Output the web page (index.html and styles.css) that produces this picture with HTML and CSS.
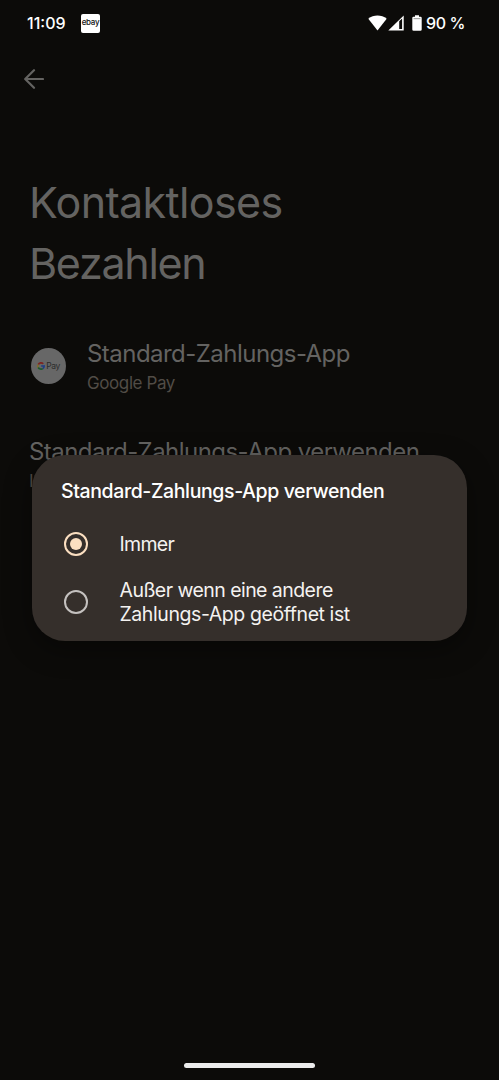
FILE: index.html
```
<!DOCTYPE html>
<html lang="de">
<head>
<meta charset="utf-8">
<title>Kontaktloses Bezahlen</title>
<link rel="stylesheet" href="styles.css">
</head>
<body>
<div class="screen">
  <header class="status">
    <span class="time">11:09</span>
    <span class="ebay">ebay</span>
    <span class="indicators">
      <svg class="wifi" width="19" height="16" viewBox="0 0 19 16"><path d="M.3 3.700C5.500-.6 13.500-.6 18.700 3.700L9.500 15.600Z" fill="#fff"/></svg>
      <svg class="signal" width="16" height="16" viewBox="0 0 16 16"><path fill-rule="evenodd" d="M15.700.5V15.600H.3ZM11.200 6.300V14H14.100V3.500Z" fill="#fff"/></svg>
      <svg class="battery" width="10" height="16" viewBox="0 0 10 16"><path d="M3 .2h4v1.500h1.500q1.200 0 1.200 1.200V14.500q0 1.300-1.300 1.300H1.600Q.3 15.800.3 14.500V2.900Q.3 1.700 1.500 1.700H3Z" fill="#fff"/><path d="M1.600 3.700h6.800" stroke="#777" stroke-width=".8"/></svg>
    </span>
    <span class="percent">90 %</span>
  </header>
  <nav class="toolbar">
    <svg width="20" height="20" viewBox="0 0 20 20" fill="none" stroke="#646361" stroke-width="2.200" stroke-linecap="round" stroke-linejoin="round"><path d="M19 10H1.500M10 1.200L1.200 10L10 18.800"/></svg>
  </nav>
  <h1 class="title"><span class="t1">Kontaktloses</span><br><span class="t2">Bezahlen</span></h1>
  <section class="row">
    <span class="gpay">
      <svg width="8" height="8" viewBox="0 0 8 8" fill="none" stroke-width="1.600"><path d="M6.300 1.800A3.200 3.200 0 0 0 1.200 2.500" stroke="#7d2420"/><path d="M1.200 2.500A3.200 3.200 0 0 0 1.200 5.500" stroke="#806d2b"/><path d="M1.200 5.500A3.200 3.200 0 0 0 5.800 6.600" stroke="#1d5a2d"/><path d="M5.800 6.600A3.200 3.200 0 0 0 7.200 4H4.200" stroke="#1d3d85"/></svg>
      <span class="gpay-text">Pay</span>
    </span>
    <div class="row-text">
      <div class="row-title">Standard-Zahlungs-App</div>
      <div class="row-sub">Google Pay</div>
    </div>
  </section>
  <section class="usage">
    <div class="usage-title">Standard-Zahlungs-App verwenden</div>
    <div class="usage-sub">Immer</div>
  </section>
  <div class="dialog" role="dialog">
    <h2 class="dialog-title">Standard-Zahlungs-App verwenden</h2>
    <div class="option first">
      <span class="radio checked"></span>
      <span class="label immer">Immer</span>
    </div>
    <div class="option">
      <span class="radio"></span>
      <span class="label"><span class="l1">Außer wenn eine andere</span><br><span class="l2">Zahlungs-App geöffnet ist</span></span>
    </div>
  </div>
  <div class="home"></div>
</div>
</body>
</html>
```
FILE: styles.css
```
* { box-sizing: border-box; }
body { margin: 0; background: #0c0b09; font-family: Inter, Roboto, sans-serif; }
.screen { position: relative; width: 499px; height: 1080px; overflow: hidden; background: #0c0b09; color: #646361; }
.status { display: flex; align-items: center; height: 46px; padding-left: 27px; color: #fff; font-size: 16px; font-weight: 500; white-space: nowrap; }
.time { width: 54px; }
.ebay { width: 19px; height: 19px; border-radius: 2px; background: #fff; color: #111; font-size: 8px; line-height: 17px; text-align: center; letter-spacing: -.3px; }
.indicators { display: flex; align-items: center; margin-left: 268px; }
.signal { margin-left: 1px; }
.battery { margin-left: 8px; }
.percent { margin-left: 4px; letter-spacing: -.4px; }
.toolbar { height: 66px; padding: 23px 0 0 24px; }
.toolbar svg { display: block; }
.title { margin: 60px 0 0 29px; font-size: 43px; line-height: 60.500px; font-weight: 400; }
.t1 { letter-spacing: -.64px; }
.t2 { letter-spacing: -1.300px; }
.row { display: flex; align-items: center; margin: 43px 0 0 31px; height: 60px; }
.gpay { display: flex; align-items: center; justify-content: center; gap: 1px; width: 35px; height: 36px; border-radius: 50%; background: #676767; color: #2b2b2b; }
.gpay-text { font-size: 8.500px; line-height: 10px; letter-spacing: -.4px; }
.row-text { margin-left: 21px; padding-top: 2px; white-space: nowrap; }
.row-title { font-size: 24px; line-height: 32px; letter-spacing: -.53px; }
.row-sub { font-size: 17px; line-height: 26px; letter-spacing: -.4px; color: #514c46; }
.usage { margin: 40px 0 0 29px; white-space: nowrap; }
.usage-title { font-size: 24px; line-height: 32px; letter-spacing: -.55px; }
.usage-sub { font-size: 17px; line-height: 26px; color: #514c46; }
.dialog { position: absolute; left: 32px; top: 455px; width: 435px; height: 185.500px; border-radius: 33px; background: #352f2b; box-shadow: 0 8px 28px rgba(0,0,0,.4); color: #f4f2f0; padding: 24px 0 0 29px; }
.dialog-title { margin: 0; font-size: 19.500px; line-height: 24px; font-weight: 500; letter-spacing: -.39px; color: #fff; }
.option { display: flex; align-items: center; height: 58px; }
.option.first { margin-top: 12px; }
.radio { display: flex; align-items: center; justify-content: center; width: 24px; height: 24px; margin-left: 3px; border: 2px solid #c4c1bf; border-radius: 50%; }
.checked { border-color: #fbdfc1; }
.checked::after { content: ""; width: 12px; height: 12px; border-radius: 50%; background: #fbdfc1; }
.label { margin-left: 31.500px; font-size: 19.500px; line-height: 24px; white-space: nowrap; }
.immer { letter-spacing: -.7px; }
.l1 { letter-spacing: -.55px; }
.l2 { letter-spacing: -.42px; }
.home { position: absolute; left: 184px; top: 1063px; width: 131px; height: 5px; border-radius: 3px; background: #ececec; }
```
